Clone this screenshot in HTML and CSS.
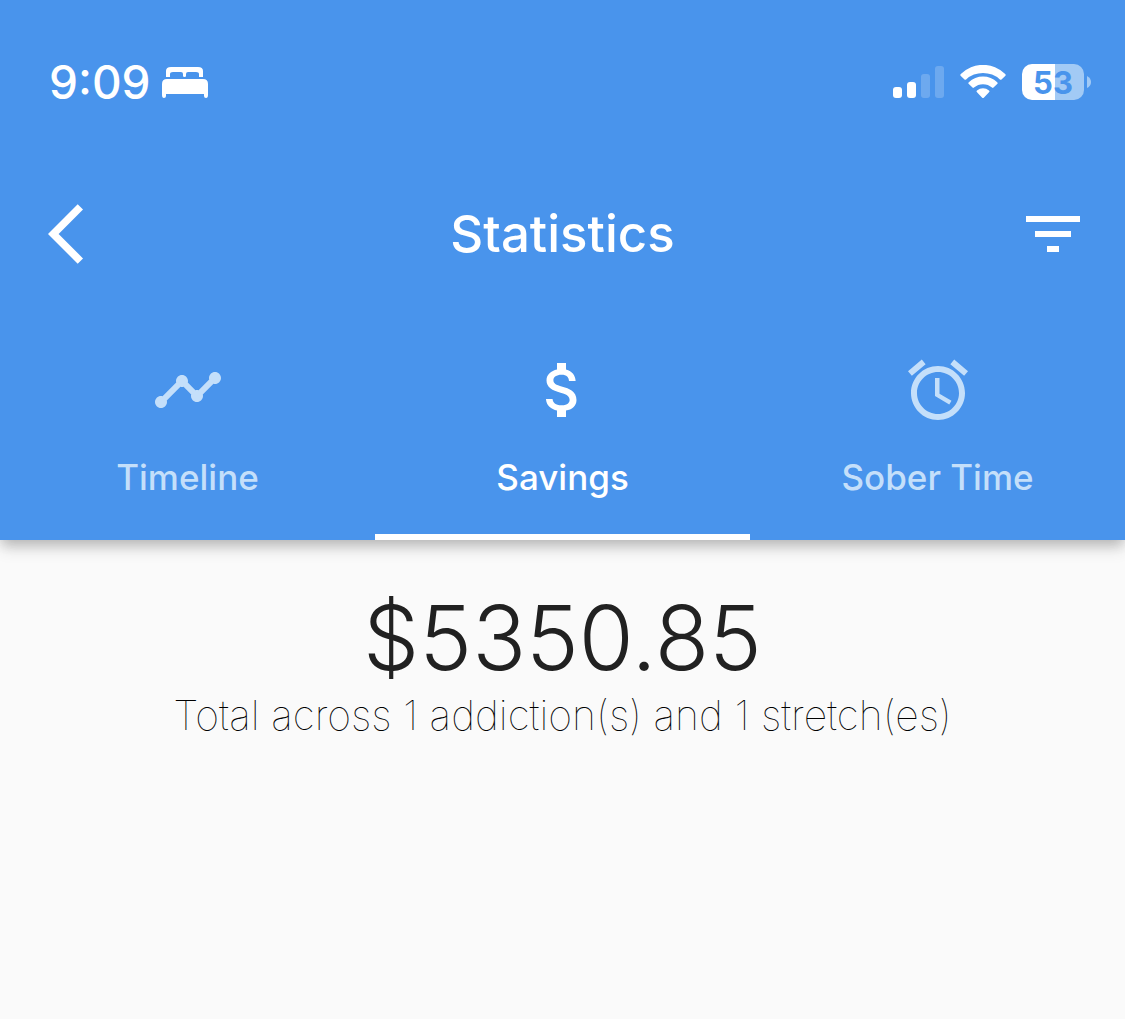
FILE: index.html
```html
<!DOCTYPE html>
<html lang="en">
<head>
<meta charset="utf-8">
<meta name="viewport" content="width=device-width, initial-scale=1">
<title>Statistics</title>
<link rel="stylesheet" href="styles.css">
</head>
<body>
<header class="header">
  <div class="status">
    <div class="status-group status-left">
      <span class="clock">9:09</span>
      <svg class="bed" viewBox="0 0 46 32" aria-hidden="true"><path d="M4 11V5Q4 1 9 1H36Q41 1 41 5V11H37V8Q37 6 34 6H26Q24 6 24 8V10Q24 11 22.500 11Q21 11 21 10V8Q21 6 19 6H11Q8 6 8 8V11ZM5 13H41Q46 13 46 18V29Q46 32 44 32Q42 32 42 30V28H4V30Q4 32 2 32Q0 32 0 29V18Q0 13 5 13Z"/></svg>
    </div>
    <div class="status-group">
      <svg class="signal" viewBox="0 0 52 32" aria-hidden="true"><rect x="1" y="21" width="9" height="11" rx="3"/><rect x="15" y="16" width="9" height="16" rx="3"/><g opacity=".2"><rect x="29" y="8" width="9" height="24" rx="3"/><rect x="43" width="9" height="32" rx="3"/></g></svg>
      <svg class="wifi" viewBox="0 0 46 34" aria-hidden="true"><path d="M.8 11Q-.2 10 .8 9A31.500 31.500 0 0 1 45.200 9Q46.200 10 45.200 11L41.500 14.500Q40.700 15.200 39.900 14.500A25 25 0 0 0 6.100 14.500Q5.300 15.200 4.500 14.500ZM8.800 19Q7.900 18.200 8.800 17.200A20.500 20.500 0 0 1 37.200 17.200Q38.100 18.200 37.200 19L33.500 22.600Q32.800 23.300 32 22.600A13.500 13.500 0 0 0 14 22.600Q13.200 23.300 12.500 22.600ZM17 27.200Q16 26.300 17 25.400A9.500 9.500 0 0 1 29 25.400Q30 26.300 29 27.200L23.800 32.700Q23 33.500 22.200 32.700Z"/></svg>
      <div class="battery"><span class="battery-level">53</span><svg class="battery-tip" viewBox="0 0 4 12" aria-hidden="true"><path d="M0 0Q4 2 4 6T0 12Z"/></svg></div>
    </div>
  </div>
  <div class="toolbar">
    <button class="icon-button" aria-label="Back"><svg class="icon" viewBox="0 0 24 24"><path d="M11.670 3.870L9.900 2.100 0 12l9.900 9.900 1.770-1.770L3.540 12z"/></svg></button>
    <h1 class="title">Statistics</h1>
    <button class="icon-button" aria-label="Filter"><svg class="icon" viewBox="0 0 24 24"><path d="M10 18h4v-2h-4v2zM3 6v2h18V6H3zm3 7h12v-2H6v2z"/></svg></button>
  </div>
  <nav class="tabs">
    <button class="tab">
      <svg class="icon" viewBox="0 0 24 24" aria-hidden="true"><path d="M23 8c0 1.100-.9 2-2 2-.18 0-.35-.02-.51-.07l-3.560 3.550c.05.16.07.34.07.52 0 1.100-.9 2-2 2s-2-.9-2-2c0-.18.02-.36.07-.52l-2.550-2.550c-.16.05-.34.07-.52.07s-.36-.02-.52-.07l-4.550 4.560c.05.16.07.33.07.51 0 1.100-.9 2-2 2s-2-.9-2-2 .9-2 2-2c.18 0 .35.02.51.07l4.560-4.550C8.020 9.360 8 9.180 8 9c0-1.100.9-2 2-2s2 .9 2 2c0 .18-.02.36-.07.52l2.550 2.550c.16-.05.34-.07.52-.07s.36.02.52.07l3.550-3.560C19.020 8.350 19 8.180 19 8c0-1.100.9-2 2-2s2 .9 2 2z"/></svg>
      <span>Timeline</span>
    </button>
    <button class="tab active" aria-current="page">
      <svg class="icon" viewBox="0 0 24 24" aria-hidden="true"><path d="M11.800 10.900c-2.270-.59-3-1.200-3-2.150 0-1.090 1.010-1.850 2.700-1.850 1.780 0 2.440.85 2.500 2.100h2.210c-.07-1.720-1.120-3.300-3.210-3.810V3h-3v2.160c-1.940.42-3.500 1.680-3.500 3.610 0 2.310 1.910 3.460 4.700 4.130 2.500.6 3 1.480 3 2.410 0 .69-.49 1.790-2.700 1.790-2.060 0-2.870-.92-2.980-2.100h-2.200c.12 2.190 1.760 3.420 3.680 3.830V21h3v-2.150c1.950-.37 3.500-1.500 3.500-3.550 0-2.840-2.430-3.810-4.700-4.400z"/></svg>
      <span>Savings</span>
    </button>
    <button class="tab">
      <svg class="icon" viewBox="0 0 24 24" aria-hidden="true"><path d="M22 5.720l-4.600-3.860-1.290 1.530 4.600 3.860L22 5.720zM7.880 3.390L6.600 1.860 2 5.710l1.290 1.530 4.590-3.850zM12.500 8H11v6l4.750 2.850.75-1.230-4-2.370V8zM12 4c-4.970 0-9 4.030-9 9s4.020 9 9 9c4.970 0 9-4.030 9-9s-4.030-9-9-9zm0 16c-3.870 0-7-3.130-7-7s3.130-7 7-7 7 3.130 7 7-3.130 7-7 7z"/></svg>
      <span>Sober Time</span>
    </button>
  </nav>
</header>
<main class="summary">
  <p class="amount">$5350.85</p>
  <p class="caption">Total across 1 addiction(s) and 1 stretch(es)</p>
</main>
</body>
</html>
```
FILE: styles.css
```css
* { box-sizing: border-box; }
body {
  margin: 0;
  background: #fafafa;
  color: #212121;
  font-family: Inter, "Liberation Sans", sans-serif;
}
svg { display: block; fill: currentColor; }
button {
  border: 0;
  padding: 0;
  background: none;
  color: inherit;
  font: inherit;
}
.header {
  background: #4994ec;
  color: #fff;
  box-shadow: 0 6px 12px -3px rgba(0, 0, 0, .16), 0 9px 15px rgba(0, 0, 0, .12), 0 3px 15px rgba(0, 0, 0, .06);
}
.status {
  display: flex;
  justify-content: space-between;
  height: 150px;
  padding: 14px 34px 0 49px;
}
.status-group {
  display: flex;
  align-items: center;
  gap: 16px;
  height: 136px;
}
.status-left { gap: 11px; }
.clock { font-size: 46px; font-weight: 500; line-height: 56px; }
.bed { width: 46px; height: 32px; }
.signal { width: 52px; height: 32px; }
.wifi { width: 46px; height: 34px; }
.battery { display: flex; align-items: center; gap: 3px; }
.battery-level {
  width: 62px;
  padding-top: 1px;
  border-radius: 10px;
  background: linear-gradient(to right, #fff 33px, #a2caf5 33px);
  color: #4994ec;
  font-size: 31px;
  font-weight: 700;
  line-height: 35px;
  text-align: center;
}
.battery-tip { width: 4px; height: 12px; color: #a2caf5; }
.toolbar {
  display: grid;
  grid-template-columns: 84px 1fr 84px;
  align-items: center;
  height: 168px;
  padding: 0 36px;
}
.icon-button { justify-self: end; }
.icon { width: 72px; height: 72px; }
.title {
  margin: 0;
  font-size: 51px;
  font-weight: 500;
  line-height: 62px;
  text-align: center;
}
.tabs { display: grid; grid-template-columns: repeat(3, 1fr); }
.tab {
  display: flex;
  flex-direction: column;
  align-items: center;
  gap: 30px;
  height: 222px;
  padding-top: 36px;
  border-bottom: 6px solid transparent;
  color: #c4dffa;
  font-size: 35px;
  font-weight: 500;
  line-height: 42px;
}
.tab.active { border-color: #fff; color: #fff; }
.summary { padding: 48px 24px; text-align: center; }
.amount { margin: 0; font-size: 89px; font-weight: 300; line-height: 100px; }
.caption { margin: 0; color: #000; font-size: 41px; font-weight: 100; line-height: 54px; }
```
